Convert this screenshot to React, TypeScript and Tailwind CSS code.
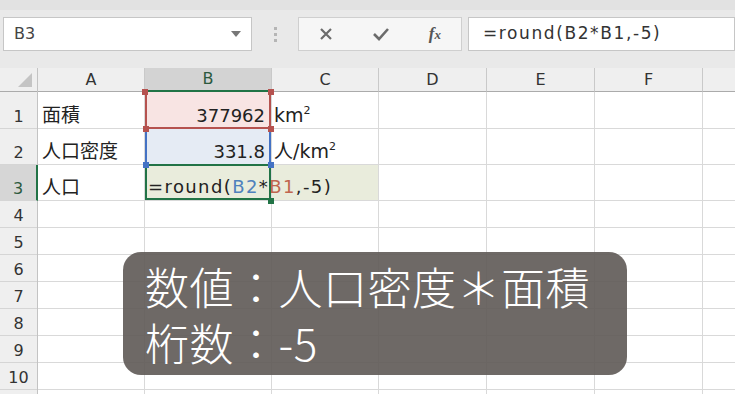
import React from 'react';

const cols = [
  { key: 'A', w: 107 },
  { key: 'B', w: 127 },
  { key: 'C', w: 107 },
  { key: 'D', w: 108 },
  { key: 'E', w: 108 },
  { key: 'F', w: 108 },
  { key: '', w: 108 },
];
const rowHeights = [37, 36, 36, 27, 27, 27, 27, 27, 27, 27, 27];

const font = { fontFamily: '"DejaVu Sans", "Noto Sans CJK JP", sans-serif' };

const Handle = ({ className }: { className: string }) => (
  <div className={`absolute w-[6px] h-[6px] z-20 ${className}`} />
);

const cellText = (r: number, c: string): React.ReactNode => {
  if (c === 'A') {
    if (r === 1) return '面積';
    if (r === 2) return '人口密度';
    if (r === 3) return '人口';
  }
  if (c === 'C') {
    if (r === 1)
      return (
        <span className="-ml-[2px]">
          km<sup className="text-[11px] -top-[8px]">2</sup>
        </span>
      );
    if (r === 2)
      return (
        <span className="-ml-[2px]">
          人/km<sup className="text-[11px] -top-[8px]">2</sup>
        </span>
      );
  }
  return null;
};

const App: React.FC = () => {
  return (
    <div className="w-[735px] h-[394px] overflow-hidden bg-white relative text-[#222]" style={font}>
      {/* Formula bar */}
      <div className="h-[68px] bg-[#e9e9e9] border-t-[10px] border-[#e2e2e2] flex items-start pt-[7px] pl-[3px]">
        <div className="w-[249px] shrink-0 h-[34px] bg-white border border-[#c6c6c6] flex items-center justify-between pl-[10px] pr-[10px]">
          <span className="text-[16px] text-[#444]">B3</span>
          <span className="w-0 h-0 border-l-[5px] border-r-[5px] border-t-[6px] border-l-transparent border-r-transparent border-t-[#777]" />
        </div>
        <div className="w-[46px] shrink-0 h-[34px] flex flex-col items-center justify-center gap-[3px]">
          <span className="w-[3px] h-[3px] bg-[#b5b5b5]" />
          <span className="w-[3px] h-[3px] bg-[#b5b5b5]" />
          <span className="w-[3px] h-[3px] bg-[#b5b5b5]" />
        </div>
        <div className="w-[164px] shrink-0 h-[34px] bg-[#f6f6f6] border border-[#cfcfcf] flex items-center justify-between pl-[19px] pr-[20px]">
          <svg width="16" height="16" viewBox="0 0 16 16">
            <path d="M3 3 L13 13 M13 3 L3 13" stroke="#6b6b6b" strokeWidth="2.2" />
          </svg>
          <svg width="18" height="16" viewBox="0 0 18 16">
            <path d="M2 8 L7 13 L16 3" stroke="#6b6b6b" strokeWidth="2.6" fill="none" />
          </svg>
          <span className="text-[17px] italic text-[#555]" style={{ fontFamily: '"Liberation Serif", serif' }}>
            <span className="font-bold">f</span>
            <span className="text-[13px] font-bold">x</span>
          </span>
        </div>
        <div className="ml-[6px] flex-1 h-[34px] bg-white border border-[#c6c6c6] flex items-center pl-[14px]">
          <span className="text-[17px] text-[#333] tracking-[1.6px]">=round(B2*B1,-5)</span>
        </div>
      </div>

      {/* Grid */}
      <div className="flex">
        {/* Row headers */}
        <div className="w-[38px] shrink-0 flex flex-col bg-[#efefef] border-r border-[#c3c3c3]">
          <div className="h-[24px] border-b border-[#ababab] relative">
            <span
              className="absolute right-[5px] bottom-[4px] w-0 h-0"
              style={{ borderRight: '14px solid #c4c4c4', borderTop: '14px solid transparent' }}
            />
          </div>
          {rowHeights.map((h, i) => (
            <div
              key={i}
              style={{ height: h }}
              className={`flex items-end justify-center pb-[3px] text-[16px] leading-none border-b border-[#d5d5d5] ${
                i === 2 ? 'bg-[#d6d6d6] text-[#2c5a3e] border-r-2 border-r-[#217346] -mr-px' : 'text-[#333]'
              }`}
            >
              {i + 1}
            </div>
          ))}
        </div>

        {cols.map((col, ci) => (
          <div key={ci} style={{ width: col.w }} className="flex flex-col shrink-0 relative">
            <div
              className={`h-[24px] flex items-center justify-center text-[16px] border-r border-[#c9c9c9] ${
                col.key === 'B'
                  ? 'bg-[#d3d3d3] border-b-2 border-b-[#217346] text-[#2c5a3e]'
                  : 'bg-[#efefef] border-b border-b-[#ababab] text-[#333]'
              }`}
            >
              {col.key}
            </div>
            {rowHeights.map((h, i) => {
              const r = i + 1;
              let bg = '';
              if (col.key === 'B' && r === 1) bg = 'bg-[#f8e4e3]';
              if (col.key === 'B' && r === 2) bg = 'bg-[#e5ebf4]';
              if ((col.key === 'B' || col.key === 'C') && r === 3) bg = 'bg-[#e9ecdc]';
              return (
                <div
                  key={i}
                  style={{ height: h }}
                  className={`relative flex items-end pb-[3px] leading-none border-r border-b border-[#d9d9d9] ${bg} ${
                    col.key === 'B' ? 'justify-end pr-[6px] text-[18px]' : 'pl-[4px] text-[19px]'
                  }`}
                >
                  {col.key === 'B' && r === 1 && '377962'}
                  {col.key === 'B' && r === 2 && '331.8'}
                  {col.key === 'B' && r === 3 && (
                    <span className="absolute left-[3px] bottom-[4px] whitespace-nowrap z-10 text-[18px] tracking-[1.4px]">
                      =round(<span className="text-[#4f81bd]">B2</span>*<span className="text-[#c0654f]">B1</span>,-5)
                    </span>
                  )}
                  {cellText(r, col.key)}
                  {col.key === 'B' && r === 1 && (
                    <>
                      <div className="absolute inset-x-0 top-0 bottom-[-1px] border-x-2 border-b-2 border-[#b5524f] z-10" />
                      <Handle className="bg-[#b5524f] -left-[3px] -top-[3px]" />
                      <Handle className="bg-[#b5524f] -right-[3px] -top-[3px]" />
                      <Handle className="bg-[#b5524f] -left-[2px] -bottom-[4px]" />
                      <Handle className="bg-[#b5524f] -right-[3px] -bottom-[4px]" />
                    </>
                  )}
                  {col.key === 'B' && r === 2 && (
                    <>
                      <div className="absolute inset-x-0 top-[1px] bottom-0 border-x-2 border-[#4472c4] z-10" />
                      <Handle className="bg-[#4472c4] -left-[2px] -bottom-[4px]" />
                      <Handle className="bg-[#4472c4] -right-[3px] -bottom-[4px]" />
                    </>
                  )}
                  {col.key === 'B' && r === 3 && (
                    <>
                      <div className="absolute inset-x-0 -top-[1px] bottom-0 border-2 border-[#217346] z-10" />
                      <Handle className="bg-[#217346] -right-[3px] -bottom-[4px]" />
                    </>
                  )}
                </div>
              );
            })}
          </div>
        ))}
      </div>

      {/* Caption overlay */}
      <div
        className="absolute left-[123px] top-[252px] w-[504px] h-[123px] rounded-[18px] bg-[#5e5955]/90 pl-[22px] pt-[6px] text-white text-[44px] font-light leading-[56px] tracking-[0.5px] z-30"
        style={{ fontFamily: '"Noto Sans CJK JP", sans-serif' }}
      >
        <div>数値：人口密度＊面積</div>
        <div>桁数：-5</div>
      </div>
    </div>
  );
};

export default App;
